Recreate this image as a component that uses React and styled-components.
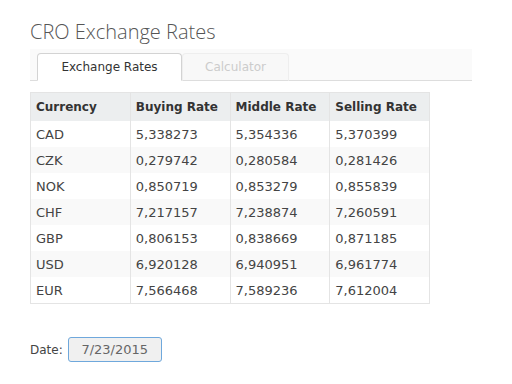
import styled, { createGlobalStyle } from "styled-components";

const GlobalStyle = createGlobalStyle`
  body {
    margin: 0;
    background: #fff;
    font-family: "DejaVu Sans", Verdana, sans-serif;
    color: #333;
  }
`;

const rates = [
  ["CAD", "5,338273", "5,354336", "5,370399"],
  ["CZK", "0,279742", "0,280584", "0,281426"],
  ["NOK", "0,850719", "0,853279", "0,855839"],
  ["CHF", "7,217157", "7,238874", "7,260591"],
  ["GBP", "0,806153", "0,838669", "0,871185"],
  ["USD", "6,920128", "6,940951", "6,961774"],
  ["EUR", "7,566468", "7,589236", "7,612004"],
];

export default function App() {
  return (
    <Page>
      <GlobalStyle />
      <Title>CRO Exchange Rates</Title>
      <TabBar>
        <Tab active>Exchange Rates</Tab>
        <Tab>Calculator</Tab>
      </TabBar>
      <Table>
        <thead>
          <tr>
            <th>Currency</th>
            <th>Buying Rate</th>
            <th>Middle Rate</th>
            <th>Selling Rate</th>
          </tr>
        </thead>
        <tbody>
          {rates.map((row) => (
            <tr key={row[0]}>
              {row.map((cell, i) => (
                <td key={i}>{cell}</td>
              ))}
            </tr>
          ))}
        </tbody>
      </Table>
      <DateRow>
        <span>Date:</span>
        <DateInput>7/23/2015</DateInput>
      </DateRow>
    </Page>
  );
}

const Page = styled.div`
  padding: 18px 40px 0 30px;
  width: 442px;
`;

const Title = styled.h1`
  margin: 0 0 4px 0;
  font-family: "Open Sans", "Liberation Sans", sans-serif;
  font-weight: 300;
  font-size: 20px;
  line-height: 27px;
  color: #555;
`;

const TabBar = styled.div`
  display: flex;
  align-items: flex-end;
  height: 31px;
  padding-left: 7px;
  background: #fafafa;
  border-bottom: 1px solid #ddd;
  margin-bottom: 11px;
`;

const Tab = styled.div`
  box-sizing: border-box;
  height: 28px;
  margin-bottom: -1px;
  width: ${(p) => (p.active ? "145px" : "107px")};
  display: flex;
  align-items: center;
  justify-content: center;
  font-size: 12px;
  border: 1px solid ${(p) => (p.active ? "#d3d3d3" : "#eee")};
  border-bottom-color: ${(p) => (p.active ? "#fff" : "#ddd")};
  border-radius: 4px 4px 0 0;
  background: ${(p) => (p.active ? "#fff" : "#f8f8f8")};
  color: ${(p) => (p.active ? "#333" : "#ccc")};
`;

const Table = styled.table`
  width: 400px;
  table-layout: fixed;
  border-collapse: collapse;
  font-size: 13px;
  border: 1px solid #e4e4e4;

  & th {
    text-align: left;
    font-weight: bold;
    font-size: 12px;
    background: #eceeef;
    height: 28px;
    padding: 0 5px;
    color: #333;
    border-left: 1px solid #e4e4e4;
  }

  & td {
    height: 26px;
    padding: 0 5px;
    color: #444;
    border-left: 1px solid #e4e4e4;
  }

  & th:first-child,
  & td:first-child {
    border-left: none;
  }

  & tbody tr:nth-child(even) td {
    background: #f9f9f9;
  }
`;

const DateRow = styled.div`
  display: flex;
  align-items: center;
  gap: 5px;
  margin-top: 33px;
  font-size: 12px;
  color: #444;
`;

const DateInput = styled.div`
  box-sizing: border-box;
  width: 94px;
  height: 25px;
  display: flex;
  align-items: center;
  justify-content: center;
  background: #f0f0f0;
  border: 1px solid #6fa8dc;
  border-radius: 3px;
  color: #666;
  font-size: 13px;
`;
